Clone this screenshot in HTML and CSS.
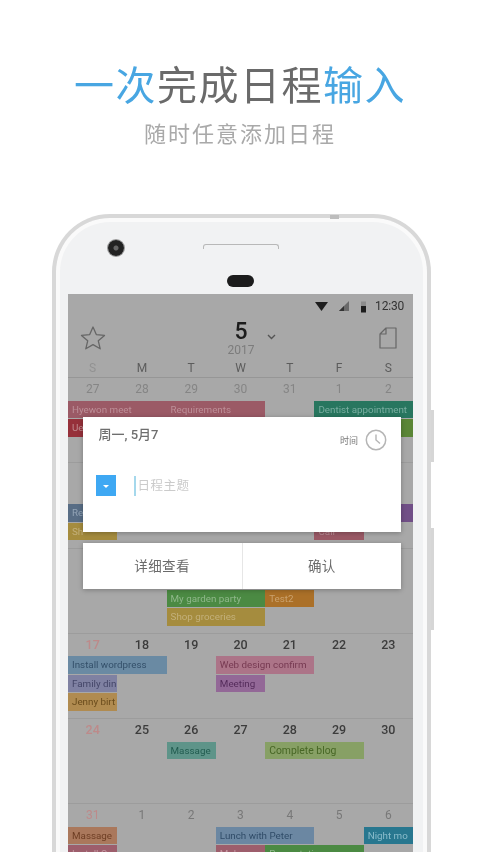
FILE: index.html
```html
<!DOCTYPE html>
<html lang="zh-CN">
<head>
<meta charset="utf-8">
<title>一次完成日程输入</title>
<link rel="stylesheet" href="styles.css">
</head>
<body>
<div class="page">
  <header class="hero">
    <h1 class="hero-title"><span class="blue">一次</span>完成日程<span class="blue">输入</span></h1>
    <p class="hero-sub">随时任意添加日程</p>
  </header>

  <div class="phone">
    <span class="phone-notch"></span>
    <span class="btn-a"></span>
    <span class="btn-b"></span>
    <div class="bezel">
      <span class="camera"></span>
      <span class="speaker"></span>
      <span class="sensor"></span>
    </div>
    <div class="screen">
      <div class="status">
        <svg class="st-icon" width="13" height="10" viewBox="0 0 13 10"><path d="M0 1h13L6.500 10z" fill="#1d1d1d"/></svg>
        <svg class="st-icon sig" width="10" height="10" viewBox="0 0 10 10"><path d="M10 0v10H0z" fill="#6a6a6a"/><path d="M5 5v5H0z" fill="#333"/></svg>
        <svg class="st-icon bat" width="7" height="13" viewBox="0 0 7 13"><path d="M1 1.500h5V12H1z" fill="#8c8c8c"/><path d="M1 6h5v6.500H1z" fill="#1d1d1d"/></svg>
        <span class="time">12:30</span>
      </div>
      <div class="appbar">
        <svg class="star" width="26" height="26" viewBox="0 0 26 26"><path d="M13 2l3.300 7.600 8.200.8-6.200 5.400 1.900 8L13 19.600l-7.200 4.200 1.900-8-6.200-5.400 8.200-.8z" fill="none" stroke="#666" stroke-width="1.300" stroke-linejoin="round"/></svg>
        <div class="month">
          <span class="month-num">5</span>
          <span class="month-year">2017</span>
          <svg class="chev" width="9" height="6" viewBox="0 0 9 6"><path d="M1 1l3.500 3.500L8 1" fill="none" stroke="#555" stroke-width="1.400"/></svg>
        </div>
        <svg class="file" width="18" height="22" viewBox="0 0 18 22"><path d="M7 1h10v20H1V7z M7 1v6H1" fill="none" stroke="#666" stroke-width="1.200" stroke-linejoin="round"/></svg>
      </div>
      <div class="weekdays">
        <span class="wk-sun">S</span><span>M</span><span>T</span><span>W</span><span>T</span><span>F</span><span>S</span>
      </div>

      <div class="week faded">
        <span>27</span><span>28</span><span>29</span><span>30</span><span>31</span><span>1</span><span>2</span>
        <b class="ev c1-2 rose">Hyewon meet</b><b class="ev c3-2 rose">Requirements</b><b class="ev c6-2 teal">Dentist appointment</b>
        <b class="ev c1-2 red">Ue</b><b class="ev c7-1 green">Go</b>
      </div>
      <div class="week">
        <span></span><span></span><span></span><span></span><span></span><span></span><span></span>
        <b class="ev c1-1 slate">Re</b><b class="ev c7-1 purple">Pa</b>
        <b class="ev c1-1 mustard">Sh</b><b class="spacer"></b>
        <b class="ev c6-1 rose r3">Call</b>
      </div>
      <div class="week">
        <span></span><span></span><span></span><span></span><span></span><span></span><span></span>
        <b class="spacer"></b>
        <b class="ev c3-2 green2 r2">My garden party</b><b class="ev c5-1 orange r2">Test2</b>
        <b class="ev c3-2 mustard r3">Shop groceries</b>
      </div>
      <div class="week dark">
        <span class="sun">17</span><span>18</span><span>19</span><span>20</span><span>21</span><span>22</span><span>23</span>
        <b class="ev c1-2 sky">Install wordpress</b><b class="ev c4-2 pink">Web design confirm</b>
        <b class="ev c1-1 lav">Family din</b><b class="ev c4-1 orchid">Meeting</b>
        <b class="ev c1-1 amber">Jenny birt</b>
      </div>
      <div class="week dark">
        <span class="sun">24</span><span>25</span><span>26</span><span>27</span><span>28</span><span>29</span><span>30</span>
        <b class="ev c3-1 mint">Massage</b><b class="ev c5-2 lime">Complete blog</b>
      </div>
      <div class="week next">
        <span class="sun">31</span><span>1</span><span>2</span><span>3</span><span>4</span><span>5</span><span>6</span>
        <b class="ev c1-1 clay">Massage</b><b class="ev c4-2 sky2">Lunch with Peter</b><b class="ev c7-1 ocean">Night mo</b>
        <b class="ev c1-1 rose2">Install On</b><b class="ev c4-1 rose2">Make up</b><b class="ev c5-2 green2">Presentation</b>
      </div>

      <div class="dialog">
        <div class="card">
          <div class="card-top">
            <span class="card-date">周一, 5月7</span>
            <span class="card-time">时间</span>
            <svg class="clock" width="22" height="22" viewBox="0 0 22 22"><circle cx="11" cy="11" r="9.700" fill="none" stroke="#b5b5b5" stroke-width="1.500"/><path d="M11 5.500V11l4 3.500" fill="none" stroke="#b5b5b5" stroke-width="1.400"/></svg>
          </div>
          <div class="card-input">
            <span class="picker"><i class="caret"></i></span>
            <span class="cursor"></span>
            <span class="placeholder">日程主题</span>
          </div>
        </div>
        <div class="actions">
          <span class="action">详细查看</span>
          <span class="action">确认</span>
        </div>
      </div>
    </div>
  </div>
</div>
</body>
</html>
```
FILE: styles.css
```css
* { box-sizing: border-box; }
html, body { margin: 0; padding: 0; }
body {
  width: 480px;
  height: 852px;
  overflow: hidden;
  background: #fff;
  font-family: "Roboto", "Noto Sans CJK SC", sans-serif;
}
.page { filter: blur(0.7px); }

.hero { height: 214px; padding-top: 55px; text-align: center; }
.hero-title {
  margin: 0;
  font: 400 40px/56px "Noto Sans CJK SC", sans-serif;
  letter-spacing: 1.500px;
  color: #6a6a6a;
}
.blue { color: #48a6e2; }
.hero-sub {
  margin: 5px 0 0;
  font: 400 22px/32px "Noto Sans CJK SC", sans-serif;
  letter-spacing: 2px;
  color: #a9a9a9;
}

.phone {
  position: relative;
  width: 379px;
  height: 700px;
  margin-left: 52px;
  padding: 0 14px 0 12px;
  border: 4px solid #d8d8d8;
  border-bottom: 0;
  border-radius: 58px 58px 0 0;
  background: #f1f2f3;
  box-shadow: inset 0 0 0 4px #fafafa;
}
.phone-notch { position: absolute; left: 274px; top: -3px; width: 9px; height: 4px; background: #bdbdbd; }
.btn-a { position: absolute; right: -7px; top: 192px; width: 3px; height: 52px; background: #d6d6d6; }
.btn-b { position: absolute; right: -7px; top: 310px; width: 3px; height: 102px; background: #d6d6d6; }

.bezel {
  display: grid;
  grid-template-columns: 1fr 76px 1fr;
  grid-template-rows: 42px 34px;
  height: 76px;
  justify-items: center;
}
.camera {
  justify-self: start;
  margin: 22px 0 0 40px;
  width: 16px;
  height: 16px;
  border-radius: 50%;
  background: radial-gradient(circle at 50% 50%, #666 0 2px, #222 3px 100%);
  box-shadow: 0 0 0 1px #9a9a9a;
}
.speaker {
  align-self: start;
  margin-top: 26px;
  width: 76px;
  height: 5px;
  border: 1px solid #b8b8b8;
  border-bottom: 0;
  border-radius: 3px 3px 0 0;
}
.sensor {
  grid-column: 2;
  width: 27px;
  height: 12px;
  margin-top: 15px;
  border-radius: 6px;
  background: #1c1c1c;
}

.screen {
  position: relative;
  width: 345px;
  height: 560px;
  background: #a8a8a8;
}

.status { display: flex; align-items: center; justify-content: flex-end; height: 26px; padding: 0 9px 2px 0; }
.st-icon { display: block; }
.sig { margin-left: 11px; }
.bat { margin-left: 11px; }
.time { margin-left: 8px; font-size: 12px; color: #333; letter-spacing: -0.2px; }

.appbar { display: flex; align-items: center; justify-content: space-between; height: 40px; padding: 0 16px 4px 12px; }
.month { position: relative; display: flex; flex-direction: column; align-items: center; margin-left: -3px; }
.month-num { font-size: 23px; line-height: 23px; font-weight: 500; color: #1c1c1c; }
.month-year { font-size: 12px; line-height: 14px; color: #7c7c7c; }
.chev { position: absolute; left: 39px; top: 14px; }

.weekdays {
  display: grid;
  grid-template-columns: repeat(7, 1fr);
  height: 18px;
  padding-top: 1px;
  border-bottom: 1px solid #969696;
  text-align: center;
  font-size: 12px;
  line-height: 15px;
  color: #5c5c5c;
}
.wk-sun { color: #929292; }

.week {
  display: grid;
  grid-template-columns: repeat(7, 1fr);
  grid-auto-rows: 18.500px;
  grid-template-rows: 22.500px;
  height: 85.300px;
  border-bottom: 1px solid #9c9c9c;
  text-align: center;
  font-size: 12px;
  line-height: 22px;
  color: #858585;
  align-content: start;
}
.dark { color: #3c3c3c; font-weight: 500; font-size: 12.500px; line-height: 21px; }
.next { color: #787878; }
.sun { color: #bd8a8a; }

.ev {
  display: block;
  height: 17.500px;
  padding-left: 4px;
  font-size: 9.800px;
  font-weight: 400;
  line-height: 17px;
  text-align: left;
  white-space: nowrap;
  overflow: hidden;
}
.spacer { grid-column: 1; grid-row: 2; height: 17.500px; }
.r2 { grid-row: 3; }
.r3 { grid-row: 4; }

.c1-1 { grid-column: 1 / span 1; }
.c1-2 { grid-column: 1 / span 2; }
.c3-1 { grid-column: 3 / span 1; }
.c3-2 { grid-column: 3 / span 2; }
.c4-1 { grid-column: 4 / span 1; }
.c4-2 { grid-column: 4 / span 2; }
.c5-1 { grid-column: 5 / span 1; }
.c5-2 { grid-column: 5 / span 2; }
.c6-1 { grid-column: 6 / span 1; }
.c6-2 { grid-column: 6 / span 2; }
.c7-1 { grid-column: 7 / span 1; }

.rose { background: #9b5a66; color: #bd8f98; }
.red { background: #96303a; color: #c08a8f; }
.teal { background: #28765f; color: #79ada0; }
.green { background: #5b8636; color: #5b8636; }
.slate { background: #586d85; color: #93a4b6; }
.purple { background: #714f87; color: #714f87; }
.mustard { background: #a58c3e; color: #c3b07a; }
.green2 { background: #4b8a43; color: #90b88b; }
.orange { background: #ab7028; color: #cba26e; }
.sky { background: #6a8aa3; color: #34506a; }
.pink { background: #ac7488; color: #773a52; }
.lav { background: #7f81a2; color: #444668; }
.orchid { background: #936897; color: #552c5b; }
.amber { background: #b08b50; color: #6a4c1c; }
.mint { background: #5e9489; color: #225c50; }
.lime { background: #87a065; color: #476625; font-size: 10.400px; }
.clay { background: #aa785c; color: #6e3e24; }
.rose2 { background: #9d5e6c; color: #c697a1; }
.sky2 { background: #6b87a2; color: #304c68; }
.ocean { background: #28778f; color: #8abccb; }

.dialog {
  position: absolute;
  left: 14.500px;
  top: 123px;
  width: 318.500px;
  display: flex;
  flex-direction: column;
  gap: 11px;
}
.card, .actions { background: #fff; box-shadow: 0 1px 5px rgba(0, 0, 0, .28); }
.card { height: 115px; padding: 10px 14px 0 16px; }
.card-top { display: flex; align-items: flex-start; }
.card-date { flex: 1; font-size: 13px; line-height: 16px; font-weight: 500; color: #6e6e6e; }
.card-time { margin: 8px 7px 0 0; font-size: 9px; line-height: 12px; color: #777; }
.clock { display: block; margin-top: 2px; }
.card-input { display: flex; align-items: center; margin-top: 24px; margin-left: -3px; }
.picker {
  display: flex;
  align-items: center;
  justify-content: center;
  width: 20px;
  height: 21px;
  background: #3ea8f3;
}
.caret { margin-top: 2px; border: 3.500px solid transparent; border-top-color: #fff; border-bottom: 0; }
.cursor { width: 2px; height: 20px; margin-left: 18px; background: #a5d8ec; }
.placeholder { margin-left: 2px; font-size: 12.500px; line-height: 20px; color: #cbcbcb; letter-spacing: 0.5px; }
.actions { display: grid; grid-template-columns: 1fr 1fr; height: 46px; }
.action {
  display: flex;
  align-items: center;
  justify-content: center;
  padding-bottom: 3px;
  font-size: 13.500px;
  color: #6a6a6a;
  letter-spacing: 0.4px;
}
.action + .action { border-left: 1px solid #e6e6e6; }
```
